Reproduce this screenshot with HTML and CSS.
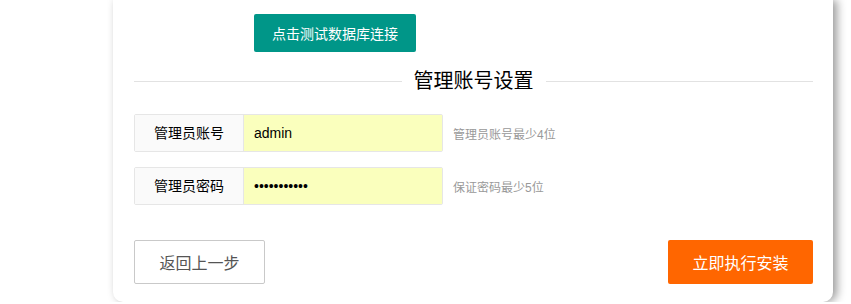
FILE: index.html
```html
<!DOCTYPE html>
<html lang="zh-CN">
<head>
    <meta charset="UTF-8">
    <title>安装 - 管理账号设置</title>
    <link rel="stylesheet" href="styles.css">
</head>
<body>
    <div class="card">
        <div class="test-row">
            <button class="btn-test" type="button">点击测试数据库连接</button>
        </div>

        <div class="divider">
            <span class="divider-line"></span>
            <span class="divider-title">管理账号设置</span>
            <span class="divider-line"></span>
        </div>

        <div class="form-item">
            <div class="input-group">
                <label class="input-label">管理员账号</label>
                <input class="input-field" type="text" value="admin">
            </div>
            <span class="input-tip">管理员账号最少4位</span>
        </div>
        <div class="form-item">
            <div class="input-group">
                <label class="input-label">管理员密码</label>
                <input class="input-field" type="password" value="12345678901">
            </div>
            <span class="input-tip">保证密码最少5位</span>
        </div>

        <div class="actions">
            <button class="btn-back" type="button">返回上一步</button>
            <button class="btn-install" type="button">立即执行安装</button>
        </div>
    </div>
</body>
</html>
```

FILE: styles.css
```css
body {
    margin: 0;
    background: #fff;
    font-family: "Liberation Sans", "Noto Sans CJK SC", sans-serif;
    color: #333;
}
.card {
    box-sizing: border-box;
    width: 720px;
    height: 302px;
    margin-left: 113px;
    padding: 14px 20px 18px 21px;
    background: #fff;
    border-radius: 0 0 10px 10px;
    box-shadow: 4px 0 10px rgba(0,0,0,0.4);
}
.test-row {
    padding-left: 120px;
}
.btn-test {
    height: 38px;
    padding: 0 18px;
    border: none;
    border-radius: 2px;
    background: #009688;
    color: #fff;
    font-family: inherit;
    font-size: 14px;
    cursor: pointer;
}
.divider {
    display: flex;
    align-items: center;
    gap: 12px;
    margin-top: 15px;
    height: 28px;
}
.divider-line {
    flex: 1;
    height: 1px;
    background: #e2e2e2;
}
.divider-title {
    font-size: 20px;
    color: #000;
    line-height: 28px;
}
.form-item {
    display: flex;
    align-items: center;
    margin-top: 19px;
}
.form-item + .form-item {
    margin-top: 15px;
}
.input-group {
    display: flex;
    height: 38px;
    box-sizing: border-box;
    border: 1px solid #e6e6e6;
    border-radius: 2px;
}
.input-label {
    width: 108px;
    line-height: 36px;
    text-align: center;
    background: #fafafa;
    border-right: 1px solid #e6e6e6;
    font-size: 14px;
    color: #000;
}
.input-field {
    width: 198px;
    box-sizing: border-box;
    border: none;
    outline: none;
    padding: 0 10px;
    background: #faffbd;
    font-family: inherit;
    font-size: 14px;
    color: #000;
}
.input-tip {
    margin-left: 10px;
    font-size: 12px;
    color: #999;
}
.actions {
    display: flex;
    justify-content: space-between;
    margin-top: 35px;
}
.btn-back {
    width: 131px;
    height: 44px;
    border: 1px solid #c9c9c9;
    border-radius: 2px;
    background: #fff;
    color: #555;
    font-family: inherit;
    font-size: 16px;
    cursor: pointer;
}
.btn-install {
    width: 145px;
    height: 44px;
    border: none;
    border-radius: 2px;
    background: #ff6600;
    color: #fff;
    font-family: inherit;
    font-size: 16px;
    cursor: pointer;
}
```
